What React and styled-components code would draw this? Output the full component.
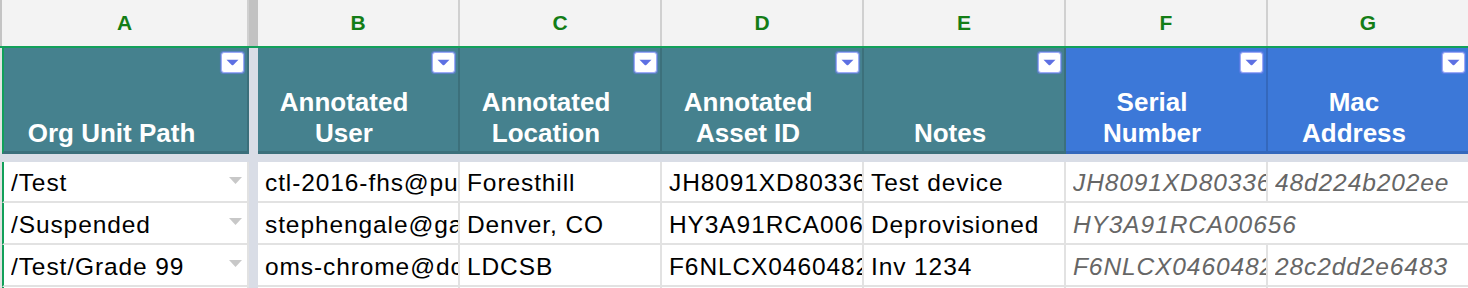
import React from 'react';
import styled, { createGlobalStyle } from 'styled-components';

const GlobalStyle = createGlobalStyle`
  html, body {
    margin: 0;
    padding: 0;
    background: #ffffff;
    overflow: hidden;
  }
  body {
    font-family: "Liberation Sans", Arial, Helvetica, sans-serif;
  }
`;

const TRACKS = '2px 247px 9px repeat(6, 202px)';

const TONES = {
  teal: '#45818e',
  blue: '#3c78d8',
};

const columns = [
  { letter: 'A', title: ['Org Unit Path'], tone: 'teal' },
  { letter: 'B', title: ['Annotated', 'User'], tone: 'teal' },
  { letter: 'C', title: ['Annotated', 'Location'], tone: 'teal' },
  { letter: 'D', title: ['Annotated', 'Asset ID'], tone: 'teal' },
  { letter: 'E', title: ['Notes'], tone: 'teal' },
  { letter: 'F', title: ['Serial', 'Number'], tone: 'blue', muted: true },
  { letter: 'G', title: ['Mac', 'Address'], tone: 'blue', muted: true },
];

const rows = [
  ['/Test', 'ctl-2016-fhs@pusd.us', 'Foresthill', 'JH8091XD80336', 'Test device', 'JH8091XD80336', '48d224b202ee'],
  ['/Suspended', 'stephengale@gafe.us', 'Denver, CO', 'HY3A91RCA00656', 'Deprovisioned', 'HY3A91RCA00656', ''],
  ['/Test/Grade 99', 'oms-chrome@dcsb.ca', 'LDCSB', 'F6NLCX0460482', 'Inv 1234', 'F6NLCX0460482', '28c2dd2e6483'],
  ['', '', '', '', '', '', ''],
];

const ROW_HEIGHTS = [41, 42, 42, 42];

const Sheet = styled.div`
  display: flex;
  flex-direction: column;
  width: 1468px;
  height: 288px;
  overflow: hidden;
`;

const Row = styled.div`
  display: grid;
  grid-template-columns: ${TRACKS};
  height: ${(p) => p.$height}px;
  box-sizing: border-box;
  flex-shrink: 0;
`;

const LetterRow = styled(Row)`
  background: #f3f3f3;
  border-bottom: 2px solid #12a05a;
`;

const Corner = styled.div`
  background: ${(p) => p.$color};
`;

const FreezeBar = styled.div`
  background: ${(p) => p.$color};
`;

const Letter = styled.div`
  display: flex;
  align-items: center;
  justify-content: center;
  border-right: 2px solid #d0d0d0;
  font-size: 21px;
  font-weight: 700;
  color: #137d16;
`;

const HeaderCell = styled.div`
  position: relative;
  display: flex;
  flex-direction: column;
  justify-content: flex-end;
  align-items: center;
  box-sizing: border-box;
  padding: 0 28px 2px 0;
  background: ${(p) => TONES[p.$tone]};
  border-right: 2px solid rgba(0, 0, 0, 0.13);
  border-bottom: 3px solid rgba(0, 0, 0, 0.13);
  border-left: ${(p) => (p.$first ? '2px solid #12a05a' : 'none')};
  color: #ffffff;
  font-size: 26px;
  font-weight: 700;
  line-height: 31px;
  text-align: center;
`;

const HeaderLine = styled.span`
  white-space: nowrap;
`;

const FilterButton = styled.span`
  position: absolute;
  top: 4px;
  right: 3px;
  width: 23px;
  height: 21px;
  box-sizing: border-box;
  display: flex;
  align-items: center;
  justify-content: center;
  background: #ffffff;
  border: 1.5px solid #9cabf7;
  border-radius: 3px;
  box-shadow: 0 0 1px 0.5px rgba(110, 130, 240, 0.6);
`;

const Gap = styled.div`
  height: 8px;
  flex-shrink: 0;
  background: #d9dde6;
`;

const DataCell = styled.div`
  display: flex;
  align-items: center;
  box-sizing: border-box;
  min-width: 0;
  padding: 3px 0 0 7px;
  grid-column: ${(p) => (p.$span ? `span ${p.$span}` : 'auto')};
  border-right: 2px solid #e2e2e2;
  border-bottom: 2px solid #e2e2e2;
  border-left: ${(p) => (p.$first ? '2px solid #12a05a' : 'none')};
  background: #ffffff;
  overflow: hidden;
`;

const CellText = styled.span`
  flex: 1;
  min-width: 0;
  overflow: hidden;
  white-space: nowrap;
  font-size: 24.5px;
  letter-spacing: 0.9px;
  line-height: 36px;
  color: ${(p) => (p.$muted ? '#666666' : '#000000')};
  font-style: ${(p) => (p.$muted ? 'italic' : 'normal')};
`;

const ValidationArrow = styled.svg`
  flex-shrink: 0;
  margin: 0 5px 6px 4px;
`;

const FilterIcon = () => (
  <svg width="13" height="7" viewBox="0 0 13 7">
    <path d="M0.5 0.8 H12.5 L7.3 6 Q6.5 6.7 5.7 6 Z" fill="#5d70e3" />
  </svg>
);

const DropArrow = () => (
  <ValidationArrow width="13" height="7" viewBox="0 0 13 7">
    <path d="M0 0 H13 L6.5 7 Z" fill="#c8c8c8" />
  </ValidationArrow>
);

const App = () => {
  const frozen = columns[0];
  const rest = columns.slice(1);

  return (
    <>
      <GlobalStyle />
      <Sheet>
        <LetterRow $height={48}>
          <Corner $color="#c4c4c4" />
          <Letter>{frozen.letter}</Letter>
          <FreezeBar $color="#c2c2c2" />
          {rest.map((col) => (
            <Letter key={col.letter}>{col.letter}</Letter>
          ))}
        </LetterRow>

        <Row $height={106}>
          <Corner $color="#e3e3e3" />
          {columns.flatMap((col, i) => {
            const cell = (
              <HeaderCell key={col.letter} $tone={col.tone} $first={i === 0}>
                {col.title.map((line) => (
                  <HeaderLine key={line}>{line}</HeaderLine>
                ))}
                <FilterButton>
                  <FilterIcon />
                </FilterButton>
              </HeaderCell>
            );
            return i === 0 ? [cell, <FreezeBar key="freeze" $color="#d9dde6" />] : [cell];
          })}
        </Row>

        <Gap />

        {rows.map((row, r) => {
          const filled = row.some(Boolean);
          const cells = [];
          row.forEach((value, c) => {
            // text in F runs on over an empty G, as the sheet does
            const last = c === row.length - 1;
            if (filled && last && !value) return;
            const spill = filled && c === row.length - 2 && !row[c + 1];
            cells.push(
              <DataCell key={c} $first={c === 0} $span={spill ? 2 : 0}>
                <CellText $muted={columns[c].muted}>{value}</CellText>
                {c === 0 && filled && <DropArrow />}
              </DataCell>
            );
            if (c === 0) cells.push(<FreezeBar key="freeze" $color="#d9dde6" />);
          });
          return (
            <Row key={r} $height={ROW_HEIGHTS[r]}>
              <Corner $color="#e3e3e3" />
              {cells}
            </Row>
          );
        })}
      </Sheet>
    </>
  );
};

export default App;
